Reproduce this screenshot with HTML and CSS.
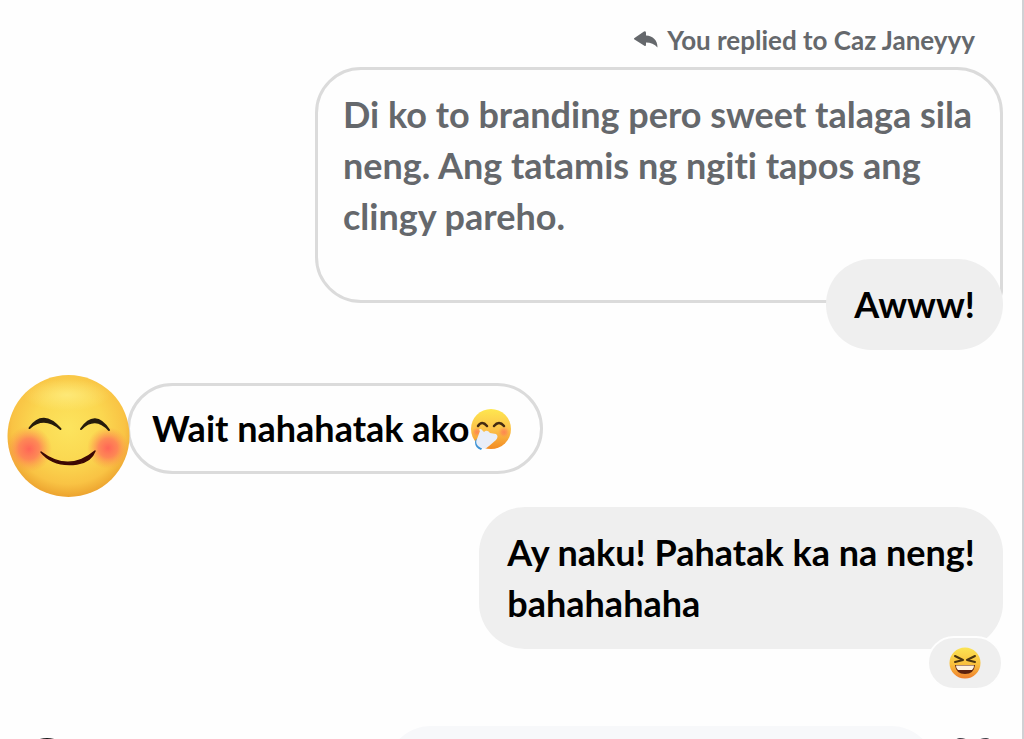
FILE: index.html
```html
<!DOCTYPE html>
<html lang="tl">
<head>
<meta charset="utf-8">
<meta name="viewport" content="width=device-width, initial-scale=1">
<title>Chat</title>
<link rel="stylesheet" href="styles.css">
</head>
<body>
<div class="chat">
  <main class="thread">
    <section class="message sent">
      <p class="reply-label">
        <svg class="reply-icon" viewBox="0 0 24 18" aria-hidden="true"><path d="M0.500 7 10 0.500Q12 -0.500 12 2V4.500C19 5 23.500 9 23.500 16.500Q19 11.500 12 11.500V13.500Q12 16 10 14.500L0.500 8.500Q-0.500 7.700 0.500 7Z" fill="#65686c"/></svg>
        <span>You replied to Caz Janeyyy</span>
      </p>
      <blockquote class="bubble quoted">Di ko to branding pero sweet talaga sila neng. Ang tatamis ng ngiti tapos ang clingy pareho.</blockquote>
      <p class="bubble filled reply">Awww!</p>
    </section>

    <section class="message received">
      <svg class="avatar" viewBox="0 0 124 124" aria-hidden="true">
        <defs>
          <radialGradient id="face" cx="50%" cy="43%" r="58%">
            <stop offset="0" stop-color="#fce45e"/><stop offset=".5" stop-color="#fbd750"/><stop offset=".8" stop-color="#f9c344"/><stop offset="1" stop-color="#eba02d"/>
          </radialGradient>
          <radialGradient id="blush">
            <stop offset="0" stop-color="#ff6557"/><stop offset=".45" stop-color="#ff7658" stop-opacity=".8"/><stop offset="1" stop-color="#fb9c45" stop-opacity="0"/>
          </radialGradient>
          <radialGradient id="shine">
            <stop offset="0" stop-color="#fff18b" stop-opacity=".65"/><stop offset="1" stop-color="#fff18b" stop-opacity="0"/>
          </radialGradient>
          <clipPath id="head"><circle cx="61.500" cy="62" r="61"/></clipPath>
        </defs>
        <circle cx="61.500" cy="62" r="61" fill="url(#face)"/>
        <ellipse cx="60" cy="21" rx="43" ry="16" fill="url(#shine)"/>
        <g clip-path="url(#head)">
          <circle cx="22" cy="75" r="23" fill="url(#blush)"/>
          <circle cx="101" cy="74" r="21" fill="url(#blush)"/>
        </g>
        <path d="M22.500 54Q36 35 53.500 55Q37 41 22.500 54ZM74 55Q88 35 102 56Q88 41 74 55Z" fill="#251b0c" stroke="#251b0c" stroke-width="2" stroke-linejoin="round"/>
        <path d="M34 78Q62 99 88 77Q84 88 70 90Q46 93 34 78Z" fill="#3c0804" stroke="#3c0804" stroke-width="1.500" stroke-linejoin="round"/>
      </svg>
      <p class="bubble outlined">
        <span>Wait nahahatak ako</span>
        <svg class="emoji" viewBox="0 0 42 42" role="img" aria-label="Giggling face">
          <defs><linearGradient id="giggle" x2="0" y2="1"><stop stop-color="#fee74f"/><stop offset=".5" stop-color="#fcc34a"/><stop offset="1" stop-color="#f28b23"/></linearGradient></defs>
          <circle cx="21" cy="21" r="20" fill="url(#giggle)"/>
          <circle cx="7" cy="24" r="5" fill="url(#blush)" opacity=".6"/><circle cx="34" cy="24" r="6" fill="url(#blush)" opacity=".6"/>
          <path d="M8 18Q12 12 17 18M24 18Q29 12 34 18" fill="none" stroke="#442b12" stroke-width="2.500" stroke-linecap="round"/>
          <path d="M6 31 14 37 11 42Q5 40 5 34Z" fill="#3c93d6"/>
          <path d="M7 31 10 23Q8 21 11 21L14 24Q17 21 20 25L26 26Q29 28 26 32L19 38Q14 43 8 38Q5 35 7 31Z" fill="#e9eef8"/>
        </svg>
      </p>
    </section>

    <section class="message sent">
      <p class="bubble filled">Ay naku! Pahatak ka na neng!<br>bahahahaha</p>
      <button class="reaction" type="button" aria-label="Laughing reaction">
        <svg class="reaction-emoji" viewBox="0 0 32 32" aria-hidden="true">
          <defs><linearGradient id="laugh" x2="0" y2="1"><stop stop-color="#fbe453"/><stop offset=".55" stop-color="#f9bf3d"/><stop offset="1" stop-color="#ee7e2d"/></linearGradient></defs>
          <circle cx="16" cy="16" r="15.500" fill="url(#laugh)"/>
          <path d="M6 9 14 13 6 15M26 9 18 13 26 15" fill="none" stroke="#4b3510" stroke-width="2" stroke-linejoin="round" stroke-linecap="round"/>
          <path d="M6 18H26Q25 27 16 27T6 18Z" fill="#5c210e"/>
          <path d="M7 18.500H25Q25 22 23 23H9Q7 22 7 18.500Z" fill="#fff3df"/>
        </svg>
      </button>
    </section>
  </main>

  <footer class="composer">
    <button class="tool" type="button" aria-label="More actions">
      <svg class="tool-icon" viewBox="0 0 50 50" aria-hidden="true"><circle cx="25" cy="25" r="23" fill="none" stroke="#1c1c1f" stroke-width="4"/><path d="M25 15V35M15 25H35" stroke="#1c1c1f" stroke-width="4"/></svg>
    </button>
    <input class="field" type="text" aria-label="Message">
    <button class="tool" type="button" aria-label="Send a like">
      <svg class="tool-icon" viewBox="0 0 50 50" aria-hidden="true"><path d="M25 46 5 23C-3 11 6 0 12 0S23 3 25 9C27 3 32 0 38 0S53 11 45 23Z" fill="#3b3b44"/></svg>
    </button>
  </footer>
</div>
</body>
</html>
```
FILE: styles.css
```css
* { box-sizing: border-box; }

body {
  margin: 0;
  background: #fefefe;
  color: #000;
  font-family: Lato, "Open Sans", sans-serif;
  font-size: 36px;
  font-weight: 700;
  font-variant-ligatures: none;
  line-height: 51px;
}

p, blockquote { margin: 0; }

button {
  padding: 0;
  border: 0;
  background: none;
  font: inherit;
}

.chat {
  display: flex;
  flex-direction: column;
  height: 100vh;
  overflow: hidden;
  border-right: 2px solid #d0d1d4;
}

.thread {
  display: flex;
  flex-direction: column;
  flex: none;
  gap: 24px;
  padding: 24px 19px 36px 7px;
}

.message { display: flex; }

.sent {
  flex-direction: column;
  align-items: flex-end;
}

.received {
  align-items: flex-start;
  margin-bottom: -15px;
}

.reply-label {
  display: flex;
  align-items: center;
  gap: 9px;
  margin-bottom: 11px;
  padding-right: 28px;
  color: #65686c;
  font-size: 26px;
  line-height: 32px;
}

.reply-icon {
  width: 24px;
  height: 18px;
}

.bubble {
  padding: 20px 28px;
  border-radius: 46px;
}

.quoted {
  max-width: 688px;
  padding: 19px 16px 58px 25px;
  border: 3px solid #dbdbdb;
  border-bottom-right-radius: 12px;
  color: #65686c;
}

.filled { background: #efefef; }

.reply { margin-top: -44px; }

.outlined {
  display: flex;
  align-items: center;
  margin: 9px 0 0 -4px;
  padding: 17px 28px 17px 22px;
  border: 3px solid #dbdbdb;
}

.avatar {
  z-index: 1;
  flex: none;
  width: 124px;
  height: 124px;
}

.emoji {
  width: 42px;
  height: 42px;
}

.reaction {
  display: grid;
  place-items: center;
  width: 76px;
  height: 54px;
  margin-top: -13px;
  border: 2px solid #fefefe;
  border-radius: 27px;
  background: #efefef;
}

.reaction-emoji {
  width: 32px;
  height: 32px;
}

.composer {
  display: flex;
  flex: none;
  align-items: flex-start;
  padding: 0 24px 0 22px;
}

.tool {
  display: flex;
  flex: none;
  padding-top: 12px;
}

.tool-icon {
  width: 50px;
  height: 50px;
}

.field {
  flex: 1;
  min-width: 0;
  height: 90px;
  margin: 0 12px 0 314px;
  padding: 0 28px;
  border: 0;
  border-radius: 45px;
  background: #f7f8fa;
  font: inherit;
}
```
